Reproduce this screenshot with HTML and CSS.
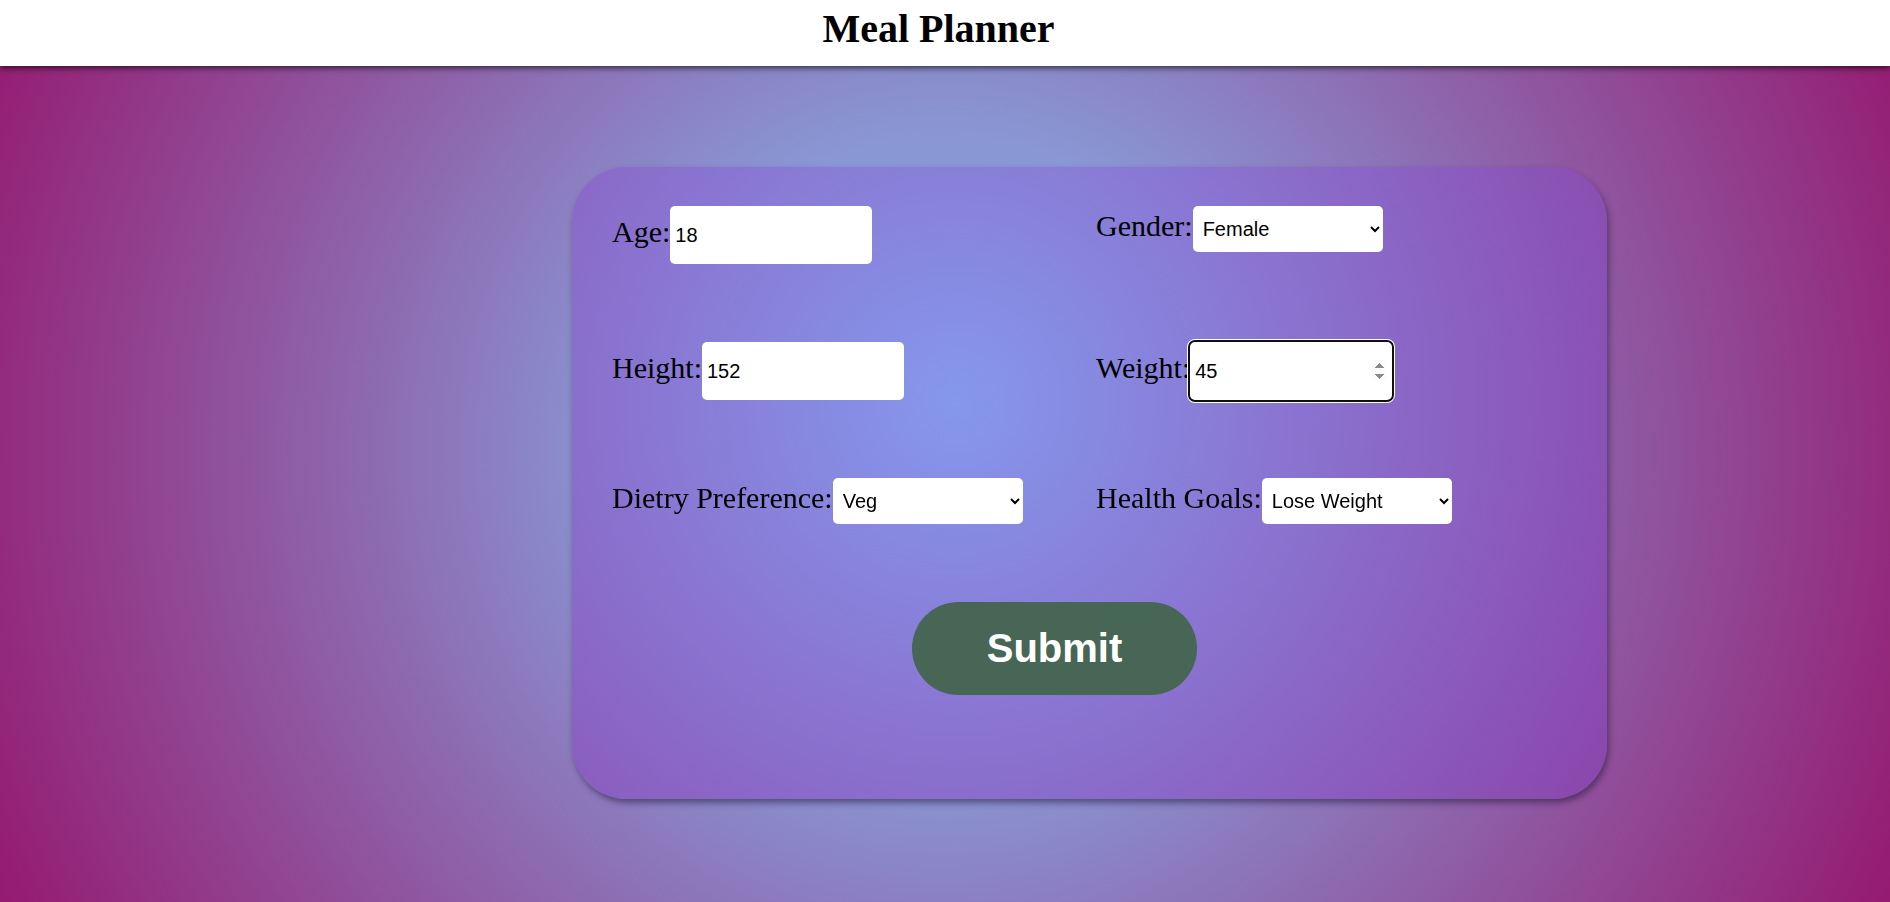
FILE: index.html
```html
<!DOCTYPE html>
<html lang="en">
<head>
<meta charset="utf-8">
<title>Meal Planner</title>
<link rel="stylesheet" href="styles.css">
</head>
<body>
<header class="topbar">
  <h1 class="title">Meal Planner</h1>
</header>
<main class="page">
  <form class="card">
    <div class="field">
      <label class="label" for="age">Age:</label>
      <input class="input" id="age" type="number" value="18">
    </div>
    <div class="field">
      <label class="label" for="gender">Gender:</label>
      <select class="select" id="gender">
        <option>Female</option>
        <option>Male</option>
      </select>
    </div>
    <div class="field">
      <label class="label" for="height">Height:</label>
      <input class="input" id="height" type="number" value="152">
    </div>
    <div class="field">
      <label class="label" for="weight">Weight:</label>
      <input class="input" id="weight" type="number" value="45" autofocus>
    </div>
    <div class="field">
      <label class="label" for="diet">Dietry Preference:</label>
      <select class="select" id="diet">
        <option>Veg</option>
        <option>Non-Veg</option>
      </select>
    </div>
    <div class="field">
      <label class="label" for="goal">Health Goals:</label>
      <select class="select" id="goal">
        <option>Lose Weight</option>
        <option>Gain Weight</option>
        <option>Maintain Weight</option>
      </select>
    </div>
    <div class="actions">
      <button class="submit" type="button">Submit</button>
    </div>
  </form>
</main>
</body>
</html>
```
FILE: styles.css
```css
html, body {
  margin: 0;
  padding: 0;
}

body {
  min-height: 100vh;
  font-family: "Liberation Serif", "Times New Roman", serif;
  background: radial-gradient(circle at 50% 50%, #889cdc 0%, #8997d4 30%, #951a70 100%);
  overflow: hidden;
}

.topbar {
  position: relative;
  z-index: 2;
  height: 66px;
  box-sizing: border-box;
  padding: 5px 13px 0 0;
  background: #ffffff;
  box-shadow: 0 2px 6px rgba(0, 0, 0, 0.65);
  text-align: center;
}

.title {
  margin: 0;
  font-size: 40px;
  font-weight: bold;
  color: #000;
}

.page {
  padding-top: 101px;
  padding-left: 572px;
}

.card {
  width: 1035px;
  box-sizing: border-box;
  padding: 39px 0 104px 40px;
  border-radius: 55px;
  background: radial-gradient(circle at 37% 37%, #8598ec 0%, #8a73d0 45%, #8b45ab 100%);
  box-shadow: 2px 4px 6px rgba(40, 30, 60, 0.55);
  display: grid;
  grid-template-columns: 484px 1fr;
  row-gap: 78px;
  align-items: start;
}

.field {
  display: flex;
  align-items: baseline;
}

.label {
  font-size: 30px;
  color: #000;
}

.input {
  box-sizing: border-box;
  width: 202px;
  height: 58px;
  padding: 0 5px;
  border: none;
  border-radius: 5px;
  background: #fff;
  font-family: "Liberation Sans", Arial, sans-serif;
  font-size: 20px;
  color: #000;
}

.input:focus {
  outline: 2px solid #101010;
  outline-offset: 0;
  box-shadow: 0 0 0 3px #ffffff;
}

.select {
  box-sizing: border-box;
  width: 190px;
  height: 46px;
  padding: 0 6px;
  border: none;
  border-radius: 5px;
  background: #fff;
  font-family: "Liberation Sans", Arial, sans-serif;
  font-size: 20px;
  color: #000;
}

.actions {
  grid-column: 1 / -1;
  padding-left: 300px;
  padding-top: 0;
}

.submit {
  width: 285px;
  height: 93px;
  border: none;
  border-radius: 47px;
  background: #476656;
  color: #fff;
  font-family: "Liberation Sans", Arial, sans-serif;
  font-size: 40px;
  font-weight: bold;
  cursor: pointer;
}
```
